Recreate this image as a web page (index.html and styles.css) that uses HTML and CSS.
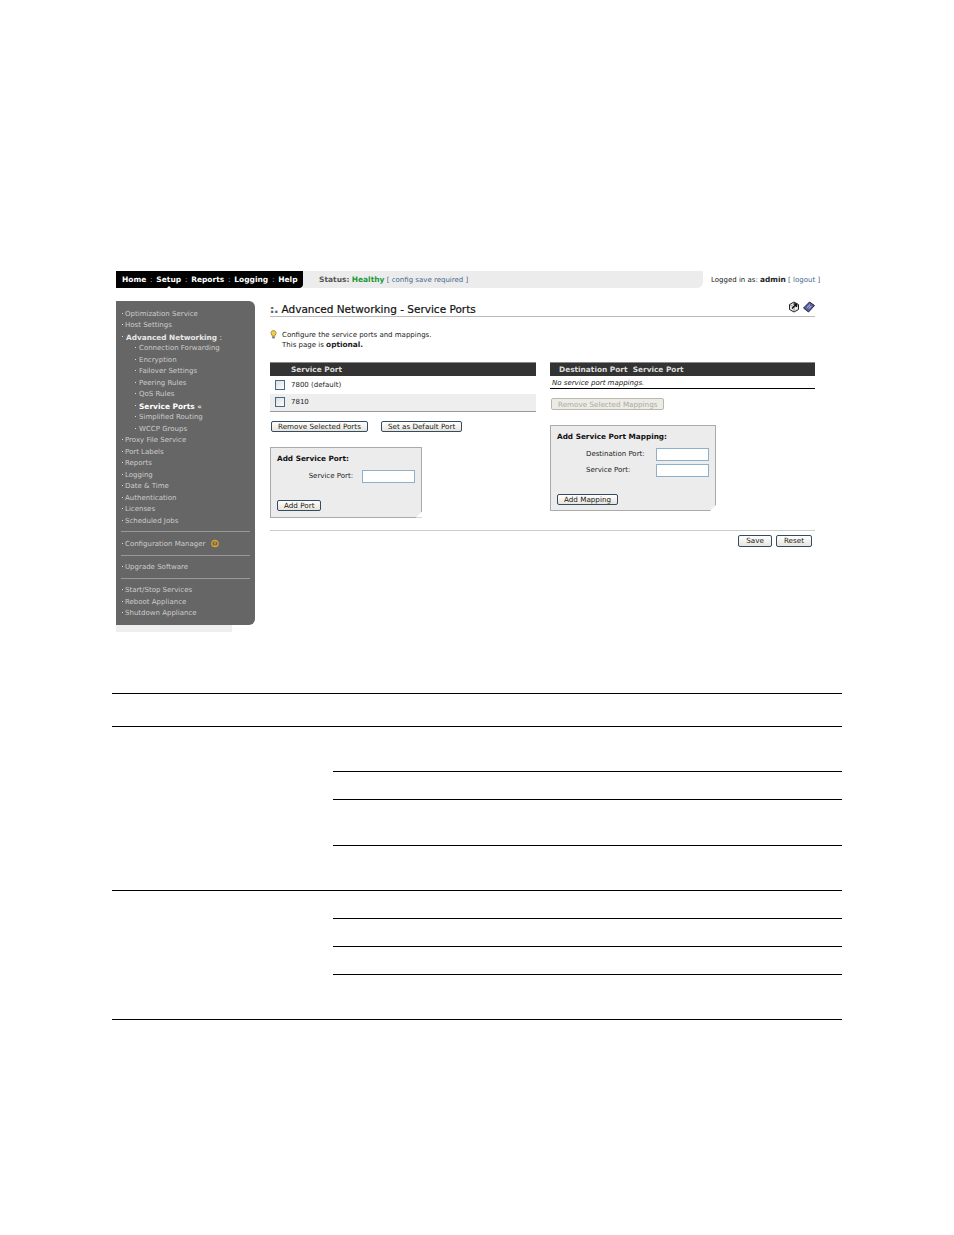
FILE: index.html
```html
<!DOCTYPE html>
<html lang="en">
<head>
<meta charset="utf-8">
<title>Advanced Networking - Service Ports</title>
<link rel="stylesheet" href="styles.css">
</head>
<body>
<div class="shot">
  <header class="topbar">
    <nav class="topnav">
      <a>Home</a><i>:</i><a class="cur">Setup</a><i>:</i><a>Reports</a><i>:</i><a>Logging</a><i>:</i><a>Help</a>
    </nav>
    <div class="status"><b>Status:</b> <b class="ok">Healthy</b> <span class="bl">[ config save required ]</span></div>
    <div class="login">Logged in as: <b>admin</b> <span class="bl">[ logout ]</span></div>
  </header>
  <div class="body">
    <div class="sidewrap">
      <aside class="side">
        <ul class="menu">
          <li>Optimization Service</li>
          <li>Host Settings</li>
          <li class="strong">Advanced Networking <span class="thin">:</span></li>
          <li class="sub">Connection Forwarding</li>
          <li class="sub">Encryption</li>
          <li class="sub">Failover Settings</li>
          <li class="sub">Peering Rules</li>
          <li class="sub">QoS Rules</li>
          <li class="sub on">Service Ports <span class="thin">«</span></li>
          <li class="sub">Simplified Routing</li>
          <li class="sub">WCCP Groups</li>
          <li>Proxy File Service</li>
          <li>Port Labels</li>
          <li>Reports</li>
          <li>Logging</li>
          <li>Date &amp; Time</li>
          <li>Authentication</li>
          <li>Licenses</li>
          <li>Scheduled Jobs</li>
        </ul>
        <ul class="menu sep s1"><li>Configuration Manager <svg class="warn" viewBox="0 0 8 9" width="8" height="9"><circle cx="4" cy="4.5" r="3.2" fill="none" stroke="#e0a81e" stroke-width="1.2"/><rect x="3.4" y="2.4" width="1.2" height="2.8" fill="#e0a81e"/><rect x="3.4" y="5.8" width="1.2" height="1" fill="#e0a81e"/></svg></li></ul>
        <ul class="menu sep s2"><li>Upgrade Software</li></ul>
        <ul class="menu sep s2"><li>Start/Stop Services</li><li>Reboot Appliance</li><li>Shutdown Appliance</li></ul>
      </aside>
      <div class="sidefoot"></div>
    </div>
    <main class="main">
      <div class="title">
        <h1><span class="dots">:.</span> Advanced Networking - Service Ports</h1>
        <div class="icons">
          <svg viewBox="0 0 12 12" width="12" height="12"><path d="M6 1 10.5 3.5 10.5 8.5 6 11 1.5 8.5 1.5 3.5Z" fill="#e8e8e8" stroke="#222"/><path d="M1.5 3.5 6 6 10.5 3.5M6 6V11" stroke="#555" stroke-width=".6" fill="none"/><path d="M4 7.5 8.5 3M8.5 3V6M8.5 3H5.5" stroke="#111" stroke-width="1.4" fill="none"/></svg>
          <svg viewBox="0 0 12 12" width="12" height="12"><path d="M.5 7 6.5 1 11.5 4.5 5.5 11Z" fill="#5560a8" stroke="#223"/><path d="M4 6.6 7 3.7M5.8 7.6 8.3 5" stroke="#ccd" fill="none"/></svg>
        </div>
      </div>
      <div class="hint">
        <svg class="bulb" viewBox="0 0 7 9" width="7" height="9"><path d="M3.5.5A2.6 2.6 0 0 1 5 5.2V6.3H2V5.2A2.6 2.6 0 0 1 3.5.5Z" fill="#f1cf4e" stroke="#8a7420" stroke-width=".7"/><rect x="2.3" y="6.8" width="2.4" height="1.6" fill="#667"/></svg>
        <p>Configure the service ports and mappings.<br>This page is <b>optional.</b></p>
      </div>
      <div class="cols">
        <section class="col">
          <div class="thead indent">Service Port</div>
          <div class="row"><span class="check"></span><span class="val">7800 (default)</span></div>
          <div class="row alt"><span class="check"></span><span class="val">7810</span></div>
          <div class="actions">
            <button class="btn">Remove Selected Ports</button>
            <button class="btn">Set as Default Port</button>
          </div>
          <form class="box boxport">
            <h2>Add Service Port:</h2>
            <div class="field"><label>Service Port:</label><span class="input"></span></div>
            <button type="button" class="btn add">Add Port</button>
            <span class="grip"></span>
          </form>
        </section>
        <section class="col right">
          <div class="thead">Destination Port&nbsp; Service Port</div>
          <div class="empty">No service port mappings.</div>
          <button class="btn dis">Remove Selected Mappings</button>
          <form class="box boxmap">
            <h2>Add Service Port Mapping:</h2>
            <div class="field"><label>Destination Port:</label><span class="input"></span></div>
            <div class="field"><label>Service Port:</label><span class="input"></span></div>
            <button type="button" class="btn add">Add Mapping</button>
            <span class="grip"></span>
          </form>
        </section>
      </div>
      <div class="savebar">
        <button class="btn">Save</button>
        <button class="btn">Reset</button>
      </div>
    </main>
  </div>
</div>
<div class="table">
  <div class="thead-row"></div>
  <div class="group">
    <div class="cell-l"></div>
    <div class="cell-r">
      <div class="h44"></div><div class="h28"></div><div class="h46"></div><div class="h45"></div>
    </div>
  </div>
  <div class="group">
    <div class="cell-l"></div>
    <div class="cell-r">
      <div class="h27"></div><div class="h28"></div><div class="h28"></div><div class="h45"></div>
    </div>
  </div>
</div>
</body>
</html>
```
FILE: styles.css
```css
* { box-sizing: border-box; }
html, body { margin: 0; background: #fff; }
body { height: 1235px; overflow: hidden; font: 7px/9px "DejaVu Sans", sans-serif; color: #222; }
b { font-size: 7.4px; }
ul { list-style: none; margin: 0; padding: 0; }
h1, h2, p { margin: 0; }

.shot { width: 706px; margin: 271px 0 0 116px; height: 361px; }

.topbar { display: flex; height: 17px; align-items: stretch; }
.topnav { flex: none; width: 187px; background: #000; color: #fff; font-weight: bold; display: flex; align-items: center; padding: 0 0 1px 6px; border-bottom-right-radius: 4px; font-size: 7.5px; white-space: nowrap; }
.topnav i { font-style: normal; font-weight: normal; color: #bbb; width: 10px; text-align: center; }
.topnav a.cur { position: relative; }
.topnav a.cur::after { content: ""; position: absolute; left: 50%; bottom: -4px; margin-left: -2px; border: 2px solid transparent; border-bottom-color: #fff; }
.status { flex: none; width: 400px; background: #ececec; border-radius: 0 0 6px 0; padding: 4px 0 0 16px; color: #555; white-space: nowrap; }
.status b { font-size: 7.5px; }
.status .ok { color: #1d9a3a; }
.bl { color: #44688c; }
.login { padding: 4px 0 0 8px; white-space: nowrap; color: #222; }

.body { display: flex; margin-top: 13px; }
.sidewrap { width: 139px; flex: none; }
.side { background: #666; height: 324px; border-radius: 0 6px 6px 0; padding: 7.5px 5px 0 5px; color: #ccc; }
.sidefoot { width: 116px; height: 7px; background: #eee; }
.menu li { height: 11.5px; line-height: 11px; padding-left: 4px; white-space: nowrap; position: relative; }
.menu li::before { content: ""; position: absolute; left: 1px; top: 4px; width: 1px; height: 1px; background: #ddd; }
.menu li.sub { padding-left: 18px; }
.menu li.sub::before { left: 14px; }
.menu li.strong { font-weight: bold; font-size: 7.35px; color: #e8e8e8; padding-left: 5px; }
.menu li.on { font-weight: bold; font-size: 7.45px; color: #fff; }
.thin { font-weight: normal; }
.sep { border-top: 1px solid #999; }
.s1 { margin-top: 3.75px; padding-top: 7.5px; }
.s2 { margin-top: 4px; padding-top: 6.5px; }
.warn { vertical-align: -2px; margin-left: 3px; }

.main { width: 545px; margin-left: 15px; }
.title { display: flex; justify-content: space-between; align-items: flex-end; height: 16px; border-bottom: 1px solid #bbb; padding-bottom: 1px; }
.title h1 { font-size: 10.5px; line-height: 12px; font-weight: normal; color: #111; -webkit-text-stroke: .2px #111; }
.dots { color: #667; font-weight: bold; }
.icons { display: flex; gap: 3px; margin-bottom: 2px; }
.hint { display: flex; margin-top: 13px; height: 32px; }
.bulb { margin-right: 5px; flex: none; }
.hint p { color: #222; padding-top: 1px; }
.cols { display: flex; gap: 14px; }
.col { width: 266px; }
.col.right { width: 265px; }
.thead { height: 14px; background: #333; border-top: 1px solid #888; color: #ddd; font-weight: bold; font-size: 7.4px; line-height: 14px; padding-left: 9px; }
.thead.indent { padding-left: 21px; }
.row { height: 17.5px; display: flex; align-items: center; padding-left: 5px; color: #222; }
.row.alt { background: #eee; border-bottom: 1px solid #999; height: 18px; }
.val { padding-top: 1px; }
.check { width: 10px; height: 10px; border: 1px solid #456a88; background: linear-gradient(135deg, #ddd, #fff); margin-right: 6px; }
.actions { display: flex; gap: 13px; margin: 9px 0 0 1px; }
.btn { display: block; height: 11px; padding: 0 6px; border: 1px solid #334c66; border-radius: 2px; background: linear-gradient(#fff, #e8e4da); font: 7.2px/9px "DejaVu Sans", sans-serif; color: #222; white-space: nowrap; }
.btn.dis { margin: 9px 0 0 1px; color: #aaa; border-color: #bbb8aa; background: #ecebe4; height: 12px; padding: 0 6px; }
.empty { height: 13px; font-style: italic; line-height: 14px; padding-left: 2px; border-bottom: 1px solid #000; color: #222; }
.box { position: relative; background: #ececec; border: 1px solid #aaa; padding: 6px 6px 0; }
.box h2 { font-size: 7.3px; line-height: 9px; font-weight: bold; color: #111; }
.boxport { width: 152px; height: 71px; margin-top: 15px; }
.boxmap { width: 166px; height: 86px; margin-top: 15px; }
.field { display: flex; align-items: center; height: 16px; color: #222; }
.field label { width: 85px; text-align: right; padding-right: 9px; white-space: nowrap; flex: none; }
.boxport .field { margin-top: 6px; }
.boxmap .field label { width: 99px; text-align: left; padding-left: 29px; padding-right: 0; }
.boxmap h2 + .field { margin-top: 5px; }
.input { width: 53px; height: 13px; background: #fff; border: 1px solid #8fb0c8; }
.add { padding: 0 6px; }
.boxport .add { margin-top: 15px; }
.boxmap .add { margin-top: 16px; }
.grip { position: absolute; right: -1px; bottom: -1px; width: 6px; height: 6px; background: #fff; clip-path: polygon(100% 0, 100% 100%, 0 100%); }
.savebar { margin-top: 12px; border-top: 1px solid #ccc; display: flex; justify-content: flex-end; gap: 4px; padding: 4px 3px 0 0; }
.savebar .btn { height: 12px; padding: 0 7px; }

.table { width: 730px; margin: 61px 0 0 112px; }
.thead-row { height: 33px; border-top: 1px solid #000; }
.group { display: flex; border-top: 1px solid #000; }
.group:last-child { border-bottom: 1px solid #000; }
.cell-l { width: 221px; flex: none; }
.cell-r { flex: 1; }
.cell-r > div + div { border-top: 1px solid #000; }
.h27 { height: 27px; }
.h28 { height: 28px; }
.h44 { height: 44px; }
.h45 { height: 45px; }
.h46 { height: 46px; }
```
